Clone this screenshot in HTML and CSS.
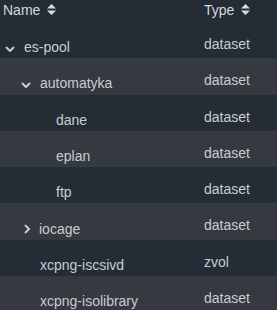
FILE: index.html
```html
<!DOCTYPE html>
<html>
<head>
<meta charset="utf-8">
<link rel="stylesheet" href="styles.css">
</head>
<body>
<div class="table">
  <div class="head">
    <div class="hcell name-h">Name
      <svg class="sort" width="9" height="11" viewBox="0 0 9 11"><path d="M4.5 0 L9 4.5 L0 4.5 Z M0 6.5 L9 6.5 L4.5 11 Z" fill="currentColor"/></svg>
    </div>
    <div class="hcell">Type
      <svg class="sort" width="9" height="11" viewBox="0 0 9 11"><path d="M4.5 0 L9 4.5 L0 4.5 Z M0 6.5 L9 6.5 L4.5 11 Z" fill="currentColor"/></svg>
    </div>
  </div>
  <div class="row dark">
    <div class="name lvl0"><svg class="chev" width="10" height="6" viewBox="0 0 10 6"><path d="M1 1 L5 5 L9 1" fill="none" stroke="currentColor" stroke-width="2"/></svg>es-pool</div>
    <div class="type">dataset</div>
  </div>
  <div class="row light">
    <div class="name lvl1"><svg class="chev" width="10" height="6" viewBox="0 0 10 6"><path d="M1 1 L5 5 L9 1" fill="none" stroke="currentColor" stroke-width="2"/></svg>automatyka</div>
    <div class="type">dataset</div>
  </div>
  <div class="row dark">
    <div class="name lvl2">dane</div>
    <div class="type">dataset</div>
  </div>
  <div class="row light">
    <div class="name lvl2">eplan</div>
    <div class="type">dataset</div>
  </div>
  <div class="row dark">
    <div class="name lvl2">ftp</div>
    <div class="type">dataset</div>
  </div>
  <div class="row light">
    <div class="name lvl1"><svg class="chev right" width="8" height="10" viewBox="0 0 8 10"><path d="M2 1 L6 5 L2 9" fill="none" stroke="currentColor" stroke-width="2"/></svg>iocage</div>
    <div class="type">dataset</div>
  </div>
  <div class="row dark">
    <div class="name lvl2b">xcpng-iscsivd</div>
    <div class="type">zvol</div>
  </div>
  <div class="row light">
    <div class="name lvl2b">xcpng-isolibrary</div>
    <div class="type">dataset</div>
  </div>
</div>
</body>
</html>
```

FILE: styles.css
```css
html, body {
  margin: 0;
  padding: 0;
  background: #242c35;
}
body {
  font-family: "Liberation Sans", Arial, sans-serif;
  font-size: 14px;
  color: #c9ccd1;
}
.table {
  width: 277px;
}
.head {
  display: grid;
  grid-template-columns: 204px 1fr;
  height: 22px;
  background: #242c35;
  color: #d6d9dd;
}
.hcell {
  display: flex;
  align-items: flex-start;
  padding-top: 2px;
  line-height: 16px;
}
.name-h {
  padding-left: 3px;
}
.sort {
  margin-left: 7px;
  margin-top: 2px;
  color: #d9dbde;
}
.row {
  display: grid;
  grid-template-columns: 204px 1fr;
  height: 36.3px;
  box-sizing: border-box;
  padding-top: 14px;
  line-height: 16px;
}
.dark { background: #242c35; }
.light { background: #353940; }
.name {
  display: flex;
  align-items: center;
  white-space: nowrap;
}
.lvl0 { padding-left: 5px; }
.lvl1 { padding-left: 21px; }
.lvl2 { padding-left: 56px; }
.lvl2b { padding-left: 40px; }
.chev {
  margin-right: 9px;
  margin-top: 3px;
  color: #c9ccd1;
}
.chev.right {
  margin-left: 2px;
  margin-right: 8px;
  margin-top: 1px;
}
```
